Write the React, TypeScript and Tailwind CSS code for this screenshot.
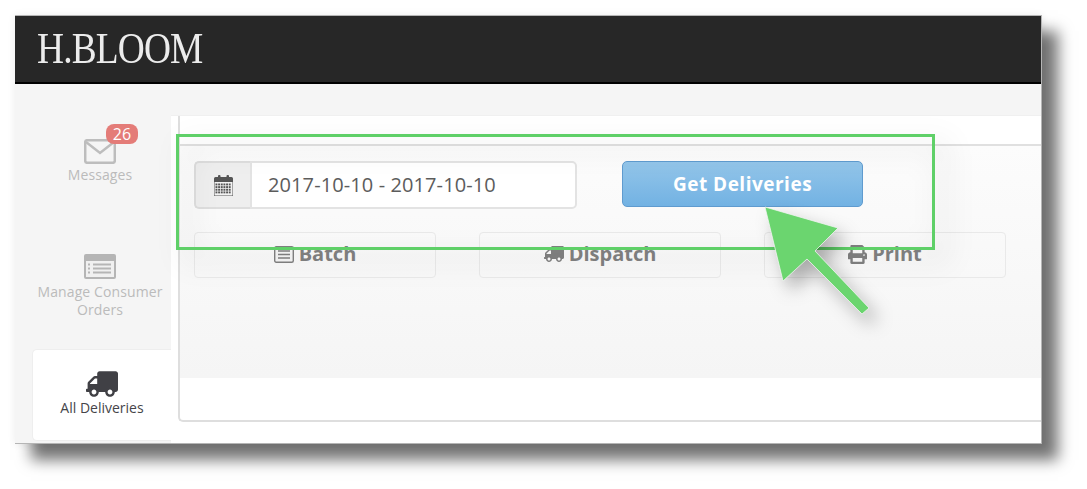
import { FaPrint, FaTruck } from 'react-icons/fa';

const sans = "font-['Open_Sans',sans-serif]";

function SideItem({ icon, label }: { icon: React.ReactNode; label: React.ReactNode }) {
    return (
        <div className="flex flex-col items-center text-center text-[14px] leading-[18px] tracking-[0.1px] text-[#bbbbbb]">
            {icon}
            <span className="mt-[2px]">{label}</span>
        </div>
    );
}

function ActionButton({ icon, label }: { icon: React.ReactNode; label: string }) {
    return (
        <div className="flex h-[46px] w-[242px] items-center justify-center gap-[5px] rounded-[4px] border border-[#e9e9e9] pb-[2px] text-[20px] font-bold text-[#808080]">
            {icon}
            <span>{label}</span>
        </div>
    );
}

function CalendarIcon() {
    const cells = [];
    for (let r = 0; r < 4; r++) {
        for (let c = 0; c < 6; c++) {
            cells.push(<rect key={`${r}-${c}`} x={1.5 + c * 2.65} y={8.5 + r * 2.65} width="1.9" height="1.9" fill="#555555" />);
        }
    }
    return (
        <svg width="19" height="21" viewBox="0 0 19 21">
            <rect x="0" y="2" width="19" height="19" rx="1.5" fill="#f2f2f2" />
            <path d="M1.5 2h16A1.5 1.5 0 0 1 19 3.5V7H0V3.5A1.5 1.5 0 0 1 1.5 2z" fill="#555555" />
            <rect x="4" y="0" width="2.5" height="4" rx="1" fill="#555555" />
            <rect x="12.5" y="0" width="2.5" height="4" rx="1" fill="#555555" />
            {cells}
            <path d="M0 7v13a1 1 0 0 0 1 1h17a1 1 0 0 0 1-1V7" fill="none" stroke="#555555" strokeWidth="1" />
        </svg>
    );
}

export default function App() {
    return (
        <div className={`relative h-[489px] w-[1087px] overflow-hidden bg-white ${sans}`}>
            <div className="ml-[15px] mt-[15px] flex h-[429px] w-[1027px] flex-col overflow-hidden border-t border-r border-b border-[#b5b5b5] bg-white shadow-[0_0_8px_rgba(0,0,0,0.07),16px_16px_14px_rgba(0,0,0,0.55)]">
                <header className="flex h-[68px] shrink-0 items-center border-b-2 border-black bg-[#272727] pl-[22px]">
                    <span className="origin-left scale-x-[0.85] font-['Liberation_Serif',serif] text-[44px] leading-none tracking-[-1px] whitespace-nowrap text-[#ececec]">
                        H.BLOOM
                    </span>
                </header>

                <div className="flex min-h-0 flex-1">
                    <aside className="flex w-[156px] shrink-0 flex-col bg-[#f5f5f5] pt-[55px]">
                        <div className="relative pl-[14px]">
                            <SideItem
                                label="Messages"
                                icon={
                                    <svg width="32" height="25" viewBox="0 0 32 25" fill="none" stroke="#bdbdbd" strokeWidth="2.5">
                                        <rect x="1.2" y="1.2" width="29.6" height="22.6" rx="2" />
                                        <path d="M2 3l14 11L30 3" />
                                    </svg>
                                }
                            />
                            <span className="absolute left-[91px] top-[-15px] flex h-[20px] w-[32px] items-center justify-center rounded-[8px] bg-[#e47c78] text-[16px] text-white">
                                26
                            </span>
                        </div>
                        <div className="mt-[70px] pl-[14px] whitespace-nowrap">
                            <SideItem
                                label={
                                    <span className="block pt-[2px]">
                                        Manage Consumer
                                        <br />
                                        Orders
                                    </span>
                                }
                                icon={
                                    <svg width="32" height="25" viewBox="0 0 32 25">
                                        <rect width="32" height="25" rx="2" fill="#b5b5b5" />
                                        <rect x="2" y="7" width="28" height="16" fill="#f0f0f0" />
                                        <path d="M9 10.5h18M9 14.5h18M9 18.5h18" stroke="#b5b5b5" strokeWidth="2" />
                                        <path d="M4 10.5h2M4 14.5h2M4 18.5h2" stroke="#b5b5b5" strokeWidth="2" />
                                    </svg>
                                }
                            />
                        </div>
                        <div className="ml-[17px] mt-[30px] flex h-[92px] flex-col items-center rounded-l-[5px] border border-r-0 border-[#eeeeee] bg-white pt-[18px] text-[14px] leading-[19px] text-[#45454a]">
                            <FaTruck className="-scale-x-100 text-[#404045]" size={32} />
                            <span className="-mt-[2px]">All Deliveries</span>
                        </div>
                    </aside>

                    <main className="flex min-w-0 flex-1 flex-col bg-[#f5f5f5] pt-[31px]">
                        <div className="flex h-[329px] flex-col border-t border-[#f0f0f0] bg-white pl-[7px]">
                            <div className="flex h-[306px] flex-col rounded-bl-[5px] border-b-2 border-l-2 border-[#dedede]">
                                <div className="h-[30px] shrink-0 border-b-2 border-[#e0e0e0] bg-white" />
                                <div className="h-[232px] shrink-0 bg-gradient-to-b from-[#fcfcfc] to-[#f5f5f5] pl-[14px] pt-[15px]">
                                    <div className="flex items-start">
                                        <div className="flex h-[48px] w-[56px] items-center justify-center rounded-l-[5px] border-2 border-r-0 border-[#dddddd] bg-[#eeeeee]">
                                            <CalendarIcon />
                                        </div>
                                        <div className="flex h-[48px] w-[327px] items-center rounded-r-[5px] border-2 border-[#e3e3e3] bg-white pl-[16px] text-[20px] tracking-[0.1px] text-[#5c5c5c]">
                                            2017-10-10 - 2017-10-10
                                        </div>
                                        <div className="ml-[45px] flex h-[46px] w-[241px] items-center justify-center rounded-[5px] border border-[#5f9bcf] bg-gradient-to-b from-[#93c5e9] to-[#72b2e3] text-[19px] font-bold tracking-[0.5px] text-white">
                                            Get Deliveries
                                        </div>
                                    </div>
                                    <div className="mt-[23px] flex gap-[43px]">
                                        <ActionButton
                                            label="Batch"
                                            icon={
                                                <svg width="20" height="17" viewBox="0 0 20 17">
                                                    <rect x="0.7" y="0.7" width="18.6" height="15.6" rx="1.5" fill="#f4f4f4" stroke="#808080" strokeWidth="1.4" />
                                                    <path d="M4 5h12M4 8.5h12M4 12h12" stroke="#808080" strokeWidth="1.6" />
                                                </svg>
                                            }
                                        />
                                        <ActionButton icon={<FaTruck className="-scale-x-100" size={20} />} label="Dispatch" />
                                        <ActionButton icon={<FaPrint size={19} />} label="Print" />
                                    </div>
                                </div>
                            </div>
                        </div>
                    </main>
                </div>
            </div>

            {/* callout drawn over the screenshot */}
            <div className="absolute left-[176px] top-[134px] h-[116px] w-[759px] border-[3px] border-[#5fd068] drop-shadow-[10px_10px_14px_rgba(0,0,0,0.22)]" />
            <svg className="absolute left-0 top-0 drop-shadow-[8px_10px_9px_rgba(0,0,0,0.3)]" width="1087" height="489" viewBox="0 0 1087 489">
                <path
                    d="M765 207L838 228L815 251L869 308L862 314L807 259L783 281Z"
                    fill="#6bd56f"
                    stroke="#f4f4f4"
                    strokeWidth="0.75"
                />
            </svg>
        </div>
    );
}
